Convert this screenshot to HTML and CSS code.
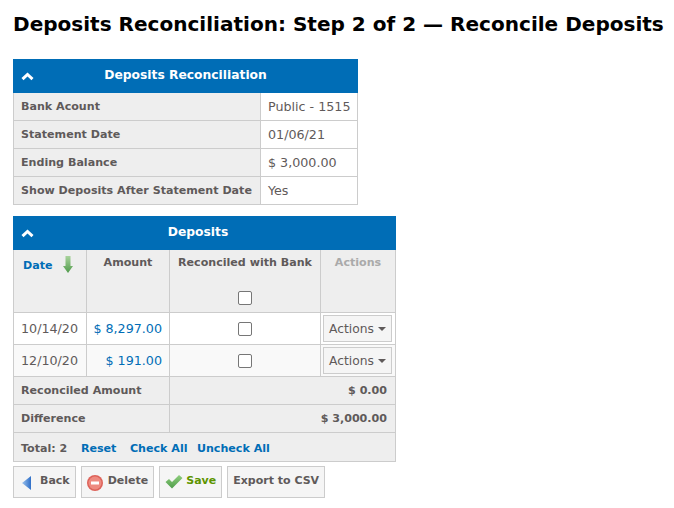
FILE: index.html
```html
<!DOCTYPE html>
<html lang="en">
<head>
    <meta charset="UTF-8">
    <meta name="viewport" content="width=device-width, initial-scale=1.0">
    <title>Deposits Reconciliation</title>
    <link rel="stylesheet" href="styles.css">
</head>
<body>

    <h1>Deposits Reconciliation: Step 2 of 2 — Reconcile Deposits</h1>

    <!-- Summary panel -->
    <table class="panel summary">
        <colgroup>
            <col class="w-label">
            <col>
        </colgroup>
        <thead>
            <tr>
                <th colspan="2" class="panel-title">
                    <svg class="collapse" viewBox="0 0 13 9"><path d="M1.500 7.200 6.500 2.500l5 4.700" /></svg>
                    Deposits Reconciliation
                </th>
            </tr>
        </thead>
        <tbody>
            <tr><th class="label">Bank Acount</th><td>Public - 1515</td></tr>
            <tr><th class="label">Statement Date</th><td>01/06/21</td></tr>
            <tr><th class="label">Ending Balance</th><td>$ 3,000.00</td></tr>
            <tr><th class="label">Show Deposits After Statement Date</th><td>Yes</td></tr>
        </tbody>
    </table>

    <!-- Deposits list -->
    <table class="panel deposits">
        <colgroup>
            <col class="w-date">
            <col class="w-amount">
            <col class="w-check">
            <col>
        </colgroup>
        <thead>
            <tr>
                <th colspan="4" class="panel-title title-offset">
                    <svg class="collapse" viewBox="0 0 13 9"><path d="M1.500 7.200 6.500 2.500l5 4.700" /></svg>
                    Deposits
                </th>
            </tr>
            <tr class="columns">
                <th class="col-date">
                    <a href="#">Date</a>
                    <svg class="sort" viewBox="0 0 10 17">
                        <defs>
                            <linearGradient id="sortFill" x1="0" x2="0" y1="0" y2="1">
                                <stop offset="0" stop-color="#a9d39c" />
                                <stop offset="1" stop-color="#4f9a4a" />
                            </linearGradient>
                        </defs>
                        <path d="M2.500 0h5v10H10l-5 7-5-7h2.500z" fill="url(#sortFill)" />
                    </svg>
                </th>
                <th>Amount</th>
                <th>
                    <div>Reconciled with Bank</div>
                    <input type="checkbox" class="check head-check">
                </th>
                <th class="col-actions">Actions</th>
            </tr>
        </thead>
        <tbody>
            <tr class="row">
                <td>10/14/20</td>
                <td class="money"><a href="#">$ 8,297.00</a></td>
                <td class="center"><input type="checkbox" class="check"></td>
                <td class="center"><button class="actions">Actions <span class="caret"></span></button></td>
            </tr>
            <tr class="row alt">
                <td>12/10/20</td>
                <td class="money"><a href="#">$ 191.00</a></td>
                <td class="center"><input type="checkbox" class="check"></td>
                <td class="center"><button class="actions">Actions <span class="caret"></span></button></td>
            </tr>
            <tr>
                <th colspan="2" class="label">Reconciled Amount</th>
                <th colspan="2" class="label right">$ 0.00</th>
            </tr>
            <tr>
                <th colspan="2" class="label">Difference</th>
                <th colspan="2" class="label right">$ 3,000.00</th>
            </tr>
        </tbody>
        <tfoot>
            <tr>
                <th colspan="4" class="label footer">
                    <span>Total: 2</span>
                    <a href="#" class="gap">Reset</a>
                    <a href="#" class="gap">Check All</a>
                    <a href="#" class="gap-small">Uncheck All</a>
                </th>
            </tr>
        </tfoot>
    </table>

    <div class="buttons">
        <button class="btn">
            <svg class="icon" viewBox="0 0 16 16">
                <defs>
                    <linearGradient id="backFill" x1="0" x2="1" y1="0" y2="0">
                        <stop offset="0" stop-color="#9cc3ee" />
                        <stop offset="1" stop-color="#2f6fc8" />
                    </linearGradient>
                </defs>
                <path d="M10 1v14L1 8z" fill="url(#backFill)" />
            </svg>
            <span class="btn-text">Back</span>
        </button>
        <button class="btn delete">
            <svg class="icon" viewBox="0 0 16 16">
                <circle cx="8" cy="8" r="8" fill="#dd6259" />
                <circle cx="8" cy="8" r="6.500" fill="#ee8a80" />
                <rect x="4" y="6.500" width="8" height="3" fill="#fff" />
            </svg>
            <span class="btn-text">Delete</span>
        </button>
        <button class="btn save">
            <svg class="icon wide" viewBox="0 0 18 16">
                <defs>
                    <linearGradient id="saveFill" x1="0" x2="0" y1="0" y2="1">
                        <stop offset="0" stop-color="#8fce7e" />
                        <stop offset="1" stop-color="#4f9d4a" />
                    </linearGradient>
                </defs>
                <path d="M.5 8 4 5l3 3 7-7 3.500 3L7 14.500z" fill="url(#saveFill)" />
            </svg>
            <span class="btn-text">Save</span>
        </button>
        <button class="btn plain"><span class="btn-text">Export to CSV</span></button>
    </div>

</body>
</html>
```
FILE: styles.css
```css
/* General page styling */
body {
    font-family: 'DejaVu Sans', Verdana, sans-serif;
    font-size: 12.700px;
    background-color: #fff;
    margin: 0;
    padding: 0 13px;
    color: #5f5a5a;
}

h1 {
    margin: 0;
    padding-top: 11px;
    height: 59px;
    box-sizing: border-box;
    font-size: 20.050px;
    line-height: 26px;
    color: #000;
    white-space: nowrap;
}

a {
    color: #006db6;
    text-decoration: none;
}

/* Panels */
.panel {
    border-collapse: collapse;
    table-layout: fixed;
    border: 1px solid #ccc;
    white-space: nowrap;
}

.summary {
    width: 345px;
    margin-bottom: 11px;
}

.deposits {
    width: 383px;
}

.w-label {
    width: 247px;
}

.w-date {
    width: 73px;
}

.w-amount {
    width: 83px;
}

.w-check {
    width: 151px;
}

.panel-title {
    position: relative;
    height: 30px;
    padding: 0 0 2px;
    border: 1px solid #006db6;
    background-color: #006db6;
    color: #fff;
    font-size: 12.300px;
    text-align: center;
}

.title-offset {
    padding-right: 13px;
}

.collapse {
    position: absolute;
    left: 7px;
    top: 12px;
    width: 13px;
    height: 9px;
    fill: none;
    stroke: #fff;
    stroke-width: 3;
}

.panel td,
.label {
    border: 1px solid #ccc;
    padding: 0 0 0 7px;
    height: 27px;
    text-align: left;
}

.label {
    background-color: #eee;
    font-weight: bold;
    font-size: 11.100px;
}

/* Deposits columns */
.columns th {
    height: 56px;
    padding: 6px 0 0;
    vertical-align: top;
    border: 1px solid #ccc;
    background-color: #eee;
    font-size: 11.100px;
    text-align: center;
}

.col-actions {
    color: #aaa;
}

.columns .col-date {
    text-align: left;
    padding-left: 9px;
}

.sort {
    width: 10px;
    height: 17px;
    margin-left: 7px;
    margin-bottom: 2px;
    vertical-align: middle;
}

.check {
    display: block;
    appearance: none;
    width: 14px;
    height: 14px;
    border: 1px solid #767676;
    border-radius: 2px;
    background-color: #fff;
    margin: 0 auto;
}

.check.head-check {
    margin-top: 22px;
}

.row td {
    height: 31px;
}

.alt td {
    background-color: #f9f9f9;
}

.panel .money {
    padding: 0 7px 0 0;
    text-align: right;
}

.panel .center {
    padding: 0;
}

.actions {
    display: block;
    margin-left: 2px;
    width: 69px;
    height: 27px;
    padding: 0;
    border: 1px solid #ccc;
    background-color: #f5f5f5;
    color: #5f5a5a;
    font-family: inherit;
    font-size: 12.300px;
}

.caret {
    display: inline-block;
    border-top: 4px solid #5f5a5a;
    border-left: 4px solid transparent;
    border-right: 4px solid transparent;
    vertical-align: middle;
}

.panel .label.right {
    padding: 0 8px 0 0;
    text-align: right;
}

.label.footer {
    height: 26px;
    padding-top: 2px;
}

.gap {
    margin-left: 9.700px;
}

.gap-small {
    margin-left: 5.500px;
}

/* Buttons below the table */
.buttons {
    display: flex;
    gap: 5px;
    margin-top: 4px;
}

.btn {
    display: flex;
    align-items: center;
    gap: 3px;
    height: 32px;
    padding: 0 5px 0 7px;
    border: 1px solid #ccc;
    background-color: #f5f5f5;
    color: #5f5a5a;
    font-family: inherit;
    font-size: 11px;
    font-weight: bold;
}

.btn-text {
    margin-bottom: 4px;
}

.icon {
    width: 16px;
    height: 16px;
    margin-top: 2px;
}

.icon.wide {
    width: 18px;
    margin-top: 0;
}

.delete {
    gap: 5px;
    padding-left: 5px;
}

.save {
    padding-left: 5px;
    color: #5d9400;
}

.plain {
    padding-left: 5px;
}
```
